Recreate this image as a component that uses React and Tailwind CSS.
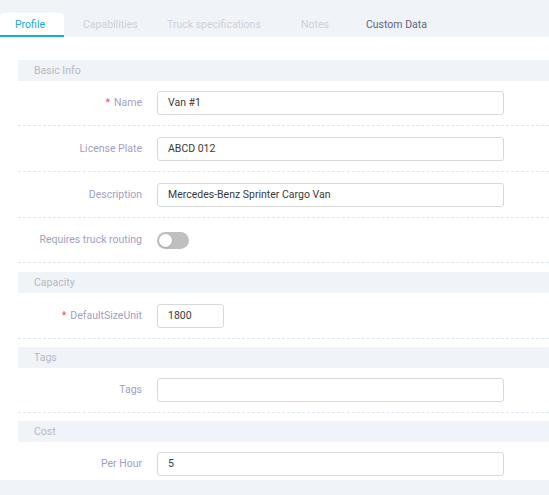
import React from 'react'

const TABS = [
  { label: 'Profile', active: true, w: 'w-[64px] pl-[15px]' },
  { label: 'Capabilities', disabled: true, w: 'w-[84px] pl-[19px]' },
  { label: 'Truck specifications', disabled: true, w: 'w-[134px] pl-[19px]' },
  { label: 'Notes', disabled: true, w: 'w-[65px] pl-[19px]' },
  { label: 'Custom Data', w: 'pl-[19px] pr-[19px]' },
]

function SectionHeader({ title }) {
  return (
    <div className="h-[21px] bg-[#f0f4f8] pl-[16px] flex items-center text-[10.5px] text-[#b4b8c6]">
      {title}
    </div>
  )
}

// rows have slightly uneven heights in the original, pass them through
function Row({ label, required, last, h = 'h-[46px]', children }) {
  return (
    <div
      className={`flex ${h} ${
        last ? 'items-start pt-[10px]' : 'items-center border-b border-dashed border-[#dde7ef]'
      }`}
    >
      <div className="w-[139px] shrink-0 pr-[15px] text-right text-[10.5px] text-[#9fa1be] whitespace-nowrap leading-[24px]">
        {required && <span className="text-[#f5465c] mr-[4px]">*</span>}
        {label}
      </div>
      <div className="flex-1">{children}</div>
    </div>
  )
}

function Input({ value, narrow }) {
  return (
    <div
      className={`h-[24px] border border-[#d9d9d9] rounded-[3px] bg-white flex items-center px-[10px] text-[10.5px] text-[#3a3a3a] ${
        narrow ? 'w-[67px]' : 'w-[347px]'
      }`}
    >
      {value}
    </div>
  )
}

function Toggle() {
  return (
    <div className="w-[32px] h-[17px] rounded-full bg-[#bfbfbf] relative">
      <div className="absolute left-[2px] top-[2px] w-[13px] h-[13px] rounded-full bg-white shadow-sm" />
    </div>
  )
}

export default function App() {
  return (
    <div
      className="w-[549px] h-[495px] bg-white overflow-hidden flex flex-col"
      style={{ fontFamily: 'Roboto, "Noto Sans", sans-serif' }}
    >
      {/* Tabs */}
      <div className="bg-[#f0f4f8] pt-[13px] flex h-[37px] shrink-0 text-[10.5px]">
        {TABS.map((t) => (
          <div
            key={t.label}
            className={`flex items-center shrink-0 whitespace-nowrap ${t.w} ${
              t.active
                ? 'bg-white rounded-t-[4px] text-[#18a9de] border-b-2 border-[#18a9de] pt-[2px]'
                : t.disabled
                ? 'text-[#cdd1d9]'
                : 'text-[#5f6384]'
            }`}
          >
            {t.label}
          </div>
        ))}
      </div>

      <div className="flex-1 min-h-0 pl-[18px] pt-[23px] flex flex-col">
        <div className="mb-[9px]">
          <SectionHeader title="Basic Info" />
          <Row label="Name" required h="h-[45px]">
            <Input value="Van #1" />
          </Row>
          <Row label="License Plate">
            <Input value="ABCD 012" />
          </Row>
          <Row label="Description">
            <Input value="Mercedes-Benz Sprinter Cargo Van" />
          </Row>
          <Row label="Requires truck routing" h="h-[45px]">
            <Toggle />
          </Row>
        </div>
        <div className="mb-[8px]">
          <SectionHeader title="Capacity" />
          <Row label="DefaultSizeUnit" required>
            <Input value="1800" narrow />
          </Row>
        </div>
        <div className="mb-[8px]">
          <SectionHeader title="Tags" />
          <Row label="Tags" h="h-[45px]">
            <Input value="" />
          </Row>
        </div>
        <div>
          <SectionHeader title="Cost" />
          <Row label="Per Hour" last h="h-[38px]">
            <Input value="5" />
          </Row>
        </div>
      </div>
      <div className="h-[15px] bg-[#f0f4f8] shrink-0" />
    </div>
  )
}
